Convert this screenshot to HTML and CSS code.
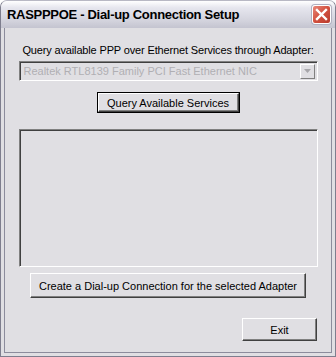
FILE: index.html
```html
<!DOCTYPE html>
<html lang="en">
<head>
  <meta charset="UTF-8" />
  <title>RASPPPOE - Dial-up Connection Setup</title>
  <link rel="stylesheet" href="styles.css">
</head>
<body>
  <div class="window">
    <!-- Barra de título -->
    <div class="titlebar">
      <span class="title">RASPPPOE - Dial-up Connection Setup</span>
      <span class="close">
        <svg width="13" height="13" viewBox="0 0 13 13">
          <path d="M2 2 L11 11 M11 2 L2 11" stroke="#fff" stroke-width="2.4" stroke-linecap="square"/>
        </svg>
      </span>
    </div>

    <div class="content">
      <div class="label">Query available PPP over Ethernet Services through Adapter:</div>

      <div class="combo">
        <span class="combo-text">Realtek RTL8139 Family PCI Fast Ethernet NIC</span>
        <span class="combo-btn">
          <svg width="7" height="4" viewBox="0 0 7 4"><path d="M0 0 H7 L3.5 4 Z" fill="#a7a6aa"/></svg>
        </span>
      </div>

      <button class="btn btn-default btn-query">Query Available Services</button>

      <div class="list"></div>

      <button class="btn btn-create">Create a Dial-up Connection for the selected Adapter</button>

      <div class="footer">
        <button class="btn btn-exit">Exit</button>
      </div>
    </div>
  </div>
</body>
</html>
```

FILE: styles.css
```css
body {
  margin: 0;
  width: 336px;
  height: 357px;
  overflow: hidden;
  font-family: "Liberation Sans", Arial, sans-serif;
  background: #ffffff;
}
.window {
  width: 336px;
  height: 357px;
  box-sizing: border-box;
  background: #e0dfe3;
  border: 1px solid #7e7e8e;
  border-top-color: #b8b8c4;
  border-radius: 7px 7px 0 0;
  display: flex;
  flex-direction: column;
}
.titlebar {
  height: 27px;
  display: flex;
  align-items: center;
  justify-content: space-between;
  padding: 0 4px 0 6px;
  background: linear-gradient(#ffffff 0%, #e6e6ee 25%, #d2d2dc 75%, #c4c4d0 100%);
  border-radius: 6px 6px 0 0;
}
.title {
  font-family: "Liberation Sans", Arial, sans-serif;
  font-weight: bold;
  font-size: 13px;
  color: #000;
  letter-spacing: -0.3px;
}
.close {
  width: 19px;
  height: 19px;
  box-sizing: border-box;
  border: 1px solid #fff;
  border-radius: 3px;
  background: linear-gradient(135deg, #e8887a 0%, #d2503f 50%, #b83a2c 100%);
  display: flex;
  align-items: center;
  justify-content: center;
  box-shadow: 0 0 0 1px #b0b0c0;
}
.content {
  flex: 1;
  display: flex;
  flex-direction: column;
  align-items: center;
  margin: 0 3px 3px 3px;
  border: 1px solid #8c8c9c;
  border-top: none;
  padding: 0 14px 0 14px;
}
.label {
  font-size: 11px;
  line-height: 13px;
  color: #000;
  margin-top: 16px;
  white-space: nowrap;
  letter-spacing: -0.15px;
}
.combo {
  margin-top: 4px;
  width: 299px;
  height: 20px;
  box-sizing: border-box;
  border-top: 1px solid #808080;
  border-left: 1px solid #808080;
  border-right: 1px solid #ffffff;
  border-bottom: 1px solid #ffffff;
  box-shadow: inset 1px 1px 0 #404040;
  background: #e0dfe3;
  display: flex;
  align-items: center;
  justify-content: space-between;
  padding: 0 2px 0 4px;
}
.combo-text {
  font-size: 11px;
  color: #b0afb3;
}
.combo-btn {
  width: 15px;
  height: 15px;
  box-sizing: border-box;
  border-top: 1px solid #ffffff;
  border-left: 1px solid #ffffff;
  border-right: 1px solid #808080;
  border-bottom: 1px solid #808080;
  display: flex;
  align-items: center;
  justify-content: center;
}
.btn {
  font-family: "Liberation Sans", Arial, sans-serif;
  font-size: 11px;
  color: #000;
  background: #e0dfe3;
  box-sizing: border-box;
  padding: 0;
  border-top: 1px solid #ffffff;
  border-left: 1px solid #ffffff;
  border-right: 1px solid #404040;
  border-bottom: 1px solid #404040;
  box-shadow: inset -1px -1px 0 #808080;
}
.btn-default {
  outline: 1px solid #000;
}
.btn-query {
  margin-top: 12px;
  width: 141px;
  height: 19px;
}
.list {
  margin-top: 17px;
  width: 299px;
  height: 138px;
  box-sizing: border-box;
  border-top: 1px solid #808080;
  border-left: 1px solid #808080;
  border-right: 1px solid #ffffff;
  border-bottom: 1px solid #ffffff;
  box-shadow: inset 1px 1px 0 #404040;
}
.btn-create {
  margin-top: 6px;
  width: 276px;
  height: 25px;
}
.footer {
  align-self: stretch;
  display: flex;
  justify-content: flex-end;
  margin-top: 20px;
}
.btn-exit {
  width: 75px;
  height: 23px;
}
```
